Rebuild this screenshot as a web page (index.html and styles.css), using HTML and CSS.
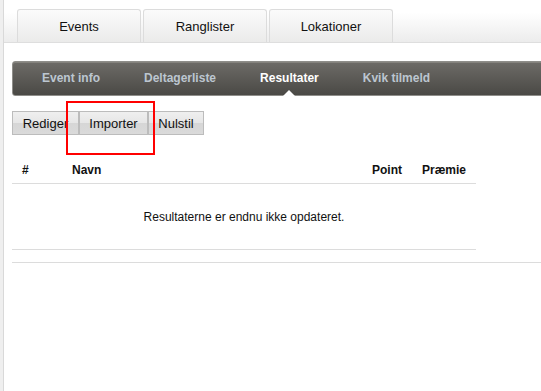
FILE: index.html
```html
<!DOCTYPE html>
<html lang="da">
<head>
  <meta charset="UTF-8" />
  <title>Resultater</title>
  <link rel="stylesheet" href="styles.css">
</head>
<body>
  <div class="page">
    <div class="topnav">
      <a class="tab">Events</a>
      <a class="tab">Ranglister</a>
      <a class="tab">Lokationer</a>
    </div>

    <ul class="subnav">
      <li>Event info</li>
      <li>Deltagerliste</li>
      <li class="active">Resultater</li>
      <li>Kvik tilmeld</li>
    </ul>

    <div class="toolbar">
      <button class="btn btn-edit">Rediger</button>
      <button class="btn btn-import">Importer</button>
      <button class="btn btn-reset">Nulstil</button>
    </div>
    <div class="highlight"></div>

    <table class="results">
      <thead>
        <tr>
          <th class="col-pos">#</th>
          <th class="col-name">Navn</th>
          <th class="col-point">Point</th>
          <th class="col-prize">Præmie</th>
        </tr>
      </thead>
      <tbody>
        <tr>
          <td colspan="4" class="empty">Resultaterne er endnu ikke opdateret.</td>
        </tr>
      </tbody>
    </table>

    <div class="divider"></div>
  </div>
</body>
</html>
```

FILE: styles.css
```css
body {
  margin: 0;
  background: #efefef;
  font-family: "Liberation Sans", Arial, sans-serif;
  color: #111;
  overflow: hidden;
}
.page {
  position: relative;
  margin-left: 3px;
  border-left: 1px solid #d9d9d9;
  background: white;
  min-height: 391px;
}
.topnav {
  display: flex;
  gap: 2px;
  height: 33px;
  padding: 9px 0 0 13px;
  border-bottom: 1px solid #dedede;
  background: linear-gradient(#ffffff 30%, #ececec);
}
.tab {
  width: 122px;
  border: 1px solid #dcdcdc;
  border-bottom: none;
  border-radius: 3px 3px 0 0;
  background: linear-gradient(#fbfbfb, #ebebea);
  text-align: center;
  font-size: 13px;
  line-height: 33px;
  color: #111;
}
.subnav {
  display: flex;
  list-style: none;
  margin: 18px -10px 0 8px;
  padding: 0 0 0 7px;
  height: 33px;
  border: 1px solid #8f8e8a;
  border-radius: 3px;
  background: linear-gradient(#6d6b67, #4a4945);
  box-shadow: inset 0 1px 0 #85837e;
}
.subnav li {
  position: relative;
  padding: 0 22px;
  line-height: 32px;
  font-size: 12px;
  font-weight: bold;
  color: #bcc6d0;
}
.subnav li.active {
  color: white;
}
.subnav li.active::after {
  content: "";
  position: absolute;
  left: 50%;
  bottom: -1px;
  margin-left: -6px;
  border-left: 6px solid transparent;
  border-right: 6px solid transparent;
  border-bottom: 6px solid white;
}
.toolbar {
  display: flex;
  margin: 15px 0 0 8px;
}
.btn {
  height: 24px;
  padding: 0;
  border: 1px solid #bcbcbc;
  background: linear-gradient(#efefef, #e6e6e6 50%, #d6d6d6 52%, #dadada);
  font-family: "Liberation Sans", Arial, sans-serif;
  font-size: 13px;
  color: #111;
  overflow: hidden;
  white-space: nowrap;
}
.btn-edit { width: 67px; }
.btn-import { width: 69px; }
.btn-reset { width: 56px; }
.highlight {
  position: absolute;
  left: 62px;
  top: 101px;
  width: 85px;
  height: 50px;
  border: 2px solid #ff0000;
}
.results {
  width: 464px;
  margin: 21px 0 0 8px;
  border-collapse: collapse;
  font-size: 12px;
}
.results th {
  height: 27px;
  padding: 0;
  text-align: left;
  font-weight: bold;
  border-bottom: 1px solid #dcdcdc;
}
.col-pos { width: 50px; padding-left: 10px !important; }
.col-name { width: 300px; }
.col-point { width: 50px; }
.results td.empty {
  height: 63px;
  text-align: center;
  border-bottom: 1px solid #dcdcdc;
}
.divider {
  margin: 12px 0 0 8px;
  border-top: 1px solid #dcdcdc;
}
```
